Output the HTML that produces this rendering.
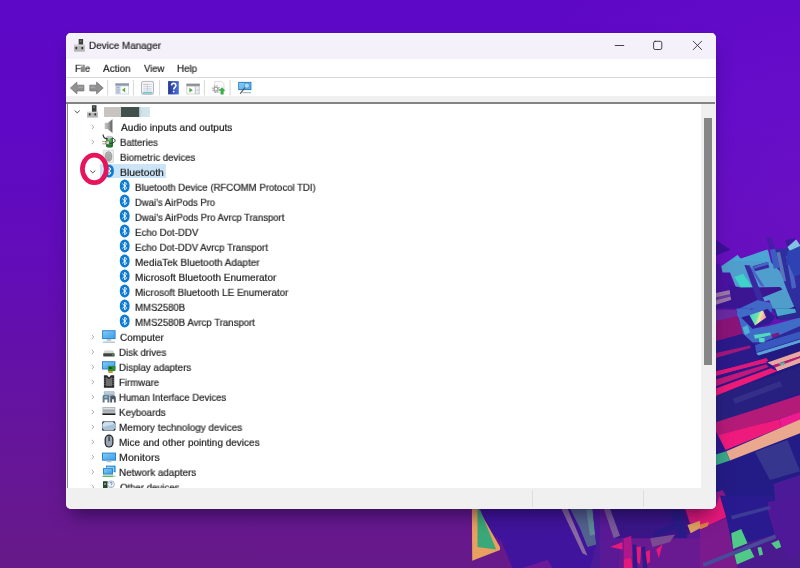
<!DOCTYPE html>
<html><head><meta charset="utf-8"><title>Device Manager</title>
<style>
html,body{margin:0;padding:0;}
body{width:800px;height:568px;overflow:hidden;position:relative;background:#5a11b4;font-family:"Liberation Sans",sans-serif;}
#wall{position:absolute;left:0;top:0;width:800px;height:568px;}
#win{position:absolute;left:66px;top:33.35px;width:650.2px;height:475.45px;border-radius:5px;overflow:hidden;background:#f0f0f0;box-shadow:0 0 1px rgba(40,20,80,.5),0 11px 16px -5px rgba(12,0,36,.5);}
#ui{position:absolute;left:0;top:0;width:800px;height:568px;}
.a{position:absolute;}
.t{position:absolute;white-space:nowrap;transform-origin:0 0;will-change:transform;-webkit-text-stroke:0.22px #1f1f1f;font-family:"Liberation Sans",sans-serif;}
svg{position:absolute;overflow:visible;}
</style></head><body>

<svg id="wall" width="800" height="568" viewBox="0 0 800 568">
<defs>
<linearGradient id="bg" x1="0" y1="0" x2="0" y2="1">
<stop offset="0" stop-color="#5d08c6"/><stop offset="0.22" stop-color="#5f09c6"/><stop offset="0.47" stop-color="#620cb8"/><stop offset="0.75" stop-color="#65149c"/><stop offset="1" stop-color="#671a88"/>
</linearGradient>
<radialGradient id="bgr" gradientUnits="userSpaceOnUse" cx="820" cy="190" r="330"><stop offset="0" stop-color="#7c1cd0" stop-opacity="0.32"/><stop offset="0.5" stop-color="#7c1cd0" stop-opacity="0.16"/><stop offset="1" stop-color="#7c1cd0" stop-opacity="0"/></radialGradient>
</defs>
<rect width="800" height="568" fill="url(#bg)"/>
<rect width="800" height="568" fill="url(#bgr)"/>
<polygon points="715.8,240.0 730.6,249.8 715.8,255.6" fill="#3d0f98"/>
<polygon points="715.8,262.5 730.0,272.5 737.5,291.2 715.8,293.1" fill="#4a12a2"/>
<polygon points="771.2,250.0 800.0,246.2 800.0,310.0 795.0,308.8 787.5,291.2 780.0,271.2 771.2,262.5" fill="#2f2e9e"/>
<polygon points="786.2,256.2 790.6,255.0 796.2,287.5 791.9,288.8" fill="#4a62c2"/>
<polygon points="776.2,252.5 780.0,251.9 786.2,281.2 782.5,281.2" fill="#5a74b8"/>
<polygon points="785.0,240.6 796.2,238.1 787.5,246.9" fill="#3a1a9a"/>
<polygon points="787.5,246.9 796.2,239.4 800.0,245.0 800.0,248.8 790.0,251.2" fill="#7fc2e2"/>
<polygon points="787.5,251.2 800.0,248.8 800.0,265.0 786.2,265.0" fill="#2e40b2"/>
<polygon points="788.0,251.5 800.0,246.0 800.0,274.3 794.2,276.7 789.3,265.7" fill="#2e42b4"/>
<polygon points="721.2,266.2 737.5,255.0 740.6,258.8 768.1,250.6 771.2,262.5 780.0,271.2 787.5,291.2 795.0,308.8 777.5,317.5 770.0,300.0 760.0,302.5 737.5,291.2 730.0,272.5 722.5,272.5" fill="#509ece"/>
<polygon points="730.6,261.0 737.5,255.0 740.6,258.8 767.5,249.4 770.0,261.0" fill="#4ba6d3"/>
<polygon points="766.0,237.2 771.2,237.2 775.0,248.8 770.0,250.0" fill="#4a1aa8"/>
<polygon points="770.0,250.0 775.0,248.8 780.0,267.5 773.8,268.8" fill="#3c5cc2"/>
<polygon points="734.4,276.9 743.1,273.8 752.5,287.5 741.2,287.5" fill="#3fd2c8"/>
<polygon points="715.8,293.1 730.0,290.0 731.2,300.0 715.8,305.0" fill="#9a78aa"/>
<polygon points="715.8,297.2 730.6,294.0 731.0,296.5 715.8,300.2" fill="#6a3aa0"/>
<polygon points="728.8,285.0 741.2,287.5 780.0,286.9 782.5,289.4 762.5,297.5 755.0,308.8 715.8,308.8 715.8,305.0 731.2,300.0" fill="#3c1692"/>
<polygon points="744.4,265.0 750.0,265.6 765.0,302.5 758.8,303.8" fill="#3a2aa2"/>
<polygon points="752.5,266.2 767.5,261.9 769.4,267.5 755.0,271.2" fill="#3a2aa2"/>
<polygon points="748.9,265.7 752.3,268.1 764.6,286.6 761.2,286.6" fill="#4a62c8"/>
<polygon points="752.3,266.9 768.3,261.7 769.0,264.2 753.6,269.1" fill="#4466c4"/>
<polygon points="736.2,310.0 757.5,300.0 775.0,303.8 770.0,315.0 737.5,317.5" fill="#4068c6"/>
<polygon points="767.5,296.2 786.2,291.2 795.0,308.8 777.5,317.5" fill="#4f9dcb"/>
<polygon points="775.0,315.0 795.0,306.2 796.9,310.0 776.9,319.4" fill="#241c86"/>
<polygon points="715.8,308.8 755.0,308.8 736.2,312.5 715.8,316.2" fill="#5a1aa0"/>
<polygon points="715.8,316.2 736.2,312.5 737.5,321.0 715.8,321.0" fill="#7a1a8c"/>
<polygon points="715.8,343.0 760.0,343.0 800.0,330.0 800.0,500.0 715.8,500.0" fill="#29198a"/>
<polygon points="715.8,310.0 736.2,310.0 737.5,316.2 715.8,321.2" fill="#6a2aa2"/>
<polygon points="715.8,321.2 737.5,316.2 743.1,333.8 715.8,341.2" fill="#8a1478"/>
<polygon points="715.8,341.2 743.1,333.8 752.5,342.5 756.2,356.2 765.0,360.0 715.8,371.2" fill="#2a1a8a"/>
<polygon points="715.8,353.1 750.0,345.6 750.6,348.1 715.8,358.1" fill="#a0187c"/>
<polygon points="715.8,371.2 765.0,360.0 767.5,362.5 715.8,375.6" fill="#e0187a"/>
<polygon points="715.8,375.6 767.5,362.5 770.0,365.6 715.8,378.1" fill="#2a1a8a"/>
<polygon points="715.8,378.1 770.0,365.6 777.5,371.2 756.2,385.0 715.8,385.0" fill="#2a1a86"/>
<polygon points="736.2,308.8 750.0,308.8 752.5,328.8 767.5,326.2 800.0,317.5 800.0,326.2 780.0,335.0 762.5,342.5 752.5,342.5 743.1,333.8" fill="#3f6cc6"/>
<polygon points="741.2,317.5 749.4,315.0 763.1,310.6 767.5,308.8 775.0,317.5 770.0,323.8 752.5,328.8" fill="#2f1a92"/>
<defs><linearGradient id="rb" x1="0" y1="0.3" x2="1" y2="0.6"><stop offset="0" stop-color="#36d6c6"/><stop offset="0.45" stop-color="#6fe0b0"/><stop offset="0.6" stop-color="#e6eaa0"/><stop offset="0.8" stop-color="#f2b0a8"/><stop offset="1" stop-color="#f08ab0"/></linearGradient></defs>
<polygon points="749.4,315.0 763.1,310.6 766.2,317.5 755.0,325.6" fill="url(#rb)"/>
<polygon points="771.2,308.8 800.0,308.8 800.0,317.8 780.0,320.2" fill="#2a2a92"/>
<polygon points="775.0,308.8 795.0,308.8 796.2,312.5 777.5,316.2" fill="#4aa6cc"/>
<polygon points="753.8,335.0 770.0,332.5 771.2,335.0 755.0,338.8" fill="#50d8c0"/>
<polygon points="758.8,338.1 764.4,338.1 765.0,342.8 759.4,342.8" fill="#50d8c0"/>
<polygon points="771.2,334.4 778.8,332.5 780.0,336.2 772.5,338.1" fill="#7a1a80"/>
<polygon points="747.5,325.0 750.0,332.5 745.0,335.0 742.5,327.5" fill="#4fb0d4"/>
<polygon points="755.0,345.0 800.0,331.2 800.0,338.8 756.2,352.5" fill="#3858c0"/>
<polygon points="752.5,342.5 762.5,342.5 780.0,335.0 800.0,326.2 800.0,331.2 755.0,345.0" fill="#2c2a98"/>
<polygon points="756.2,353.1 800.0,339.4 800.0,342.8 758.8,356.2" fill="#5aa0d8"/>
<polygon points="756.2,356.2 800.0,342.8 800.0,351.2 767.5,362.5 765.0,360.0" fill="#221a80"/>
<polygon points="767.5,362.5 800.0,351.2 800.0,356.2 772.5,365.6" fill="#e8a8a0"/>
<polygon points="772.5,365.6 800.0,356.2 800.0,358.1 775.0,367.5" fill="#c01878"/>
<polygon points="775.0,367.5 800.0,358.1 800.0,363.1 777.5,371.2" fill="#e8a8a0"/>
<polygon points="777.5,363.8 785.0,361.9 783.8,365.6" fill="#50c0a0"/>
<polygon points="777.5,371.2 800.0,363.1 800.0,381.0 756.2,381.0" fill="#221a80"/>
<polygon points="715.8,395.6 782.5,372.5 800.0,366.2 800.0,392.5 715.8,423.8" fill="#28207f"/>
<polygon points="732.5,398.8 780.0,381.2 782.5,386.2 735.0,403.8" fill="#34308a"/>
<polygon points="715.8,372.1 766.3,358.0 768.6,360.8 715.8,376.0" fill="#e0187a"/>
<polygon points="715.8,379.4 766.3,364.2 768.6,367.0 715.8,386.2" fill="#c2187a"/>
<polygon points="715.8,388.4 770.8,368.2 777.6,371.0 715.8,395.8" fill="#ee1a78"/>
<polygon points="797.5,396.9 800.0,396.2 800.0,400.0 797.5,400.0" fill="#e8e0f0"/>
<polygon points="715.8,465.0 730.0,460.0 800.0,432.5 800.0,501.0 715.8,501.0" fill="#241c86"/>
<polygon points="755.0,451.9 787.5,440.0 800.0,471.2 770.0,480.0" fill="#37368f"/>
<polygon points="773.8,483.8 800.0,475.0 800.0,501.0 775.0,501.0" fill="#4a1a98"/>
<polygon points="715.8,492.5 722.5,490.0 728.8,501.0 715.8,501.0" fill="#8a1a8a"/>
<polygon points="715.8,422.2 800.0,395.0 800.0,413.0 715.8,437.0" fill="#b41a78"/>
<polygon points="715.8,436.0 779.4,419.0 781.2,427.6 715.8,454.0" fill="#ee1a7c"/>
<polygon points="779.4,419.0 800.0,412.2 800.0,420.0 781.2,427.6" fill="#ee1a90"/>
<polygon points="726.2,451.2 800.0,419.6 800.0,433.2 730.0,460.5" fill="#eaa88e"/>
<polygon points="715.8,431.0 726.2,451.2 715.8,454.6" fill="#2a1a8a"/>
<polygon points="715.8,454.4 726.2,451.2 730.0,460.5 715.8,465.2" fill="#3aa888"/>
<polygon points="700.0,508.9 716.2,504.5 720.0,495.8 726.2,517.0 700.0,529.5" fill="#e8187a"/>
<polygon points="700.0,524.5 708.8,522.0 707.5,527.0 700.0,529.5" fill="#e0804a"/>
<polygon points="720.0,495.8 775.0,495.8 767.5,508.2 775.0,534.5 732.5,547.0 726.2,517.0" fill="#2a1a90"/>
<polygon points="767.5,502.0 800.0,497.0 800.0,549.5 790.0,559.5 775.0,534.5" fill="#4f1899"/>
<polygon points="700.0,529.5 726.2,518.2 732.5,547.0 737.5,568.0 700.0,568.0" fill="#7a1a8c"/>
<polygon points="732.5,547.0 775.0,534.5 790.0,559.5 800.0,549.5 800.0,568.0 737.5,568.0" fill="#4a1a8e"/>
<polygon points="731.2,533.2 741.2,528.9 747.5,543.2 733.1,548.9" fill="#50c888"/>
<polygon points="734.4,554.5 750.0,548.2 754.4,557.0 736.9,564.5" fill="#50c888"/>
<polygon points="757.5,547.6 761.2,547.0 763.1,554.5 759.4,555.8" fill="#50c888"/>
<polygon points="771.2,543.2 778.8,540.1 781.2,547.0 776.2,548.9" fill="#50c888"/>
<polygon points="702.5,563.2 775.0,534.5 776.2,538.2 703.8,567.0" fill="#4a4a9a"/>
<polygon points="731.2,515.8 770.0,505.8 770.6,508.9 731.9,519.5" fill="#3c3c96"/>
<polygon points="600.0,508.5 700.0,508.5 700.0,568.0 600.0,568.0" fill="#5a1a96"/>
<polygon points="607.5,508.5 685.0,508.5 690.0,523.2 690.6,533.2 681.2,538.2 650.0,540.8 623.8,538.2 613.8,538.2" fill="#3a1688"/>
<polygon points="603.8,508.5 610.0,508.5 620.0,535.8 613.8,538.2" fill="#7a5a9c"/>
<polygon points="685.0,508.5 700.0,508.5 700.0,522.0 690.0,523.2" fill="#e0187a"/>
<polygon points="687.5,525.1 700.0,520.8 700.0,528.2 690.6,533.2" fill="#e0a060"/>
<polygon points="653.8,532.0 680.0,520.8 681.2,525.8 655.0,537.0" fill="#2a1a88"/>
<polygon points="670.0,512.0 680.0,509.5 687.5,538.2 680.0,540.8" fill="#2a1c88"/>
<polygon points="621.2,538.2 700.0,538.2 700.0,568.0 618.8,568.0" fill="#6a1a90"/>
<polygon points="610.0,547.0 622.5,542.0 622.5,549.5" fill="#e6187a"/>
<polygon points="636.2,547.0 641.2,546.4 640.0,564.5 636.9,562.0" fill="#e6187a"/>
<polygon points="645.0,552.0 650.0,550.1 650.0,562.0 646.2,564.5" fill="#e6187a"/>
<polygon points="656.2,549.5 662.5,544.5 658.8,558.2" fill="#e6187a"/>
<polygon points="623.8,559.5 631.2,557.0 632.5,568.0 623.8,568.0" fill="#e6187a"/>
<polygon points="623.8,538.2 631.2,535.8 632.5,557.0 623.8,559.5" fill="#b0188a"/>
<polygon points="632.5,544.5 636.2,544.5 637.5,568.0 633.1,568.0" fill="#2e1a8a"/>
<polygon points="641.2,547.0 645.0,546.4 647.5,568.0 643.1,568.0" fill="#2e1a8a"/>
<polygon points="650.0,538.2 675.0,534.5 670.0,542.0 652.5,547.0" fill="#7a4a92"/>
<polygon points="500.0,508.5 600.0,508.5 600.0,568.0 552.5,568.0 547.5,560.1 522.5,568.0 512.5,568.0 500.0,538.2" fill="#40149c"/>
<polygon points="561.2,508.5 567.5,508.5 587.5,555.8 582.5,553.2" fill="#8a6aa2"/>
<polygon points="570.0,508.5 592.5,508.5 596.2,544.5 587.5,547.0 580.0,528.2" fill="#536390"/>
<polygon points="586.2,509.5 592.5,509.5 595.0,534.5 590.0,535.8" fill="#5f8a96"/>
<polygon points="522.5,568.0 547.5,560.1 552.5,568.0" fill="#6a1a98"/>
<polygon points="592.5,508.5 600.0,508.5 600.0,568.0 590.0,568.0 596.2,544.5" fill="#4a1a98"/>
<polygon points="480.0,508.5 500.0,508.5 500.0,543.2 496.2,535.8 493.8,540.8" fill="#40149c"/>
<polygon points="471.9,508.5 478.1,508.5 500.0,547.0 500.0,550.1 472.2,560.8" fill="#e8a060"/>
<polygon points="477.5,509.5 480.0,509.5 496.2,549.5 477.5,547.0" fill="#3aa878"/>
</svg>
<div id="win">
<div class="a" style="left:0.00px;top:-0.35px;width:651.00px;height:25.60px;background:#f4f1fa;"></div>
<div class="a" style="left:0.00px;top:0.00px;width:651.00px;height:0.80px;background:#fbfaff;"></div>
<div class="a" style="left:0.00px;top:25.25px;width:650.00px;height:18.60px;background:#ffffff;"></div>
<div class="a" style="left:0.00px;top:43.85px;width:650.00px;height:0.90px;background:#d9d9d9;"></div>
<div class="a" style="left:0.00px;top:44.75px;width:650.00px;height:17.90px;background:#ffffff;"></div>
<div class="a" style="left:0.00px;top:62.65px;width:650.00px;height:5.90px;background:#f0f0f0;"></div>
<div class="a" style="left:0.00px;top:68.55px;width:649.20px;height:1.70px;background:#838383;"></div>
<div class="a" style="left:0.00px;top:70.25px;width:2.00px;height:384.00px;background:#f6f4fa;"></div>
<div class="a" style="left:0.70px;top:70.25px;width:1.25px;height:384.00px;background:#8a8a8a;"></div>
<div class="a" style="left:1.95px;top:70.25px;width:633.25px;height:384.00px;background:#ffffff;"></div>
<div class="a" style="left:635.20px;top:70.25px;width:14.80px;height:384.00px;background:#f0f0f0;"></div>
<div class="a" style="left:638.20px;top:84.65px;width:7.60px;height:247.00px;background:#868686;"></div>
<div class="a" style="left:0.00px;top:454.25px;width:651.00px;height:21.40px;background:#f0f0f0;"></div>
<div class="a" style="left:466.30px;top:456.15px;width:0.80px;height:17.00px;background:#dedede;"></div>
<div class="a" style="left:577.30px;top:456.15px;width:0.80px;height:17.00px;background:#dedede;"></div>
</div>
<div id="ui">
<svg class="a" style="left:0;top:0" width="800" height="568" viewBox="0 0 800 568"><rect x="78.7" y="39" width="4.4" height="5.9" fill="#3b403e"/><rect x="80.1" y="40.6" width="1.4" height="1.1" fill="#8d9391"/><rect x="74" y="44.7" width="10.8" height="7" fill="#b6b6b6"/><rect x="74" y="44.7" width="10.8" height="1.2" fill="#d9d9d9"/><rect x="75.5" y="47" width="1.6" height="2.2" fill="#2c2c2c"/><rect x="81.5" y="47" width="1.6" height="2.2" fill="#2c2c2c"/></svg>
<span class="t" style="left:88.71px;top:38.60px;line-height:15px;font-size:10px;color:#1f1f1f;transform:scale(0.9889,0.9);">Device Manager</span>
<svg class="a" style="left:0;top:0" width="800" height="568" viewBox="0 0 800 568">
<g stroke="#303030" stroke-width="0.9" fill="none" stroke-linecap="round">
<path d="M615.2 45.5H623.8"/>
<rect x="653.6" y="41.3" width="8.2" height="8.2" rx="1.6"/>
<path d="M693.3 41.2L701.6 49.6M701.6 41.2L693.3 49.6"/>
</g></svg>
<span class="t" style="left:74.64px;top:61.70px;line-height:15px;font-size:10px;color:#1f1f1f;transform:scale(0.9463,0.9);">File</span>
<span class="t" style="left:103.40px;top:61.70px;line-height:15px;font-size:10px;color:#1f1f1f;transform:scale(0.9889,0.9);">Action</span>
<span class="t" style="left:144.21px;top:61.70px;line-height:15px;font-size:10px;color:#1f1f1f;transform:scale(0.9439,0.9);">View</span>
<span class="t" style="left:177.22px;top:61.70px;line-height:15px;font-size:10px;color:#1f1f1f;transform:scale(0.9741,0.9);">Help</span>
<svg class="a" style="left:0;top:0" width="800" height="568" viewBox="0 0 800 568">
<defs>
<linearGradient id="hlp" x1="0" x2="1" y1="0" y2="0"><stop offset="0" stop-color="#25358f"/><stop offset="0.55" stop-color="#3656c0"/><stop offset="1" stop-color="#4b74d6"/></linearGradient>
<linearGradient id="mon8" x1="0" x2="1" y1="0" y2="1"><stop offset="0" stop-color="#86cdf6"/><stop offset="1" stop-color="#52aeea"/></linearGradient>
</defs>
<!-- back / forward arrows -->
<path d="M70.4 88L76.9 82.1V85.2H83.9V90.9H76.9V93.9Z" fill="#909090" stroke="#787878" stroke-width="0.8" stroke-linejoin="round"/>
<path d="M103.2 88L96.6 82.1V85.2H89.8V90.9H96.6V93.9Z" fill="#909090" stroke="#787878" stroke-width="0.8" stroke-linejoin="round"/>
<path d="M78.5 87.2H83.2M90.5 87.2H95.2" stroke="#b8b8b8" stroke-width="0.8"/>
<!-- separators -->
<g stroke="#d4d4d4" stroke-width="0.9"><path d="M107.7 80V95.6M133.4 80V95.6M159.6 80V95.6M204.4 80V95.6M230.1 80V95.6"/></g>
<!-- icon 3: console tree back -->
<rect x="115.4" y="83.4" width="13.6" height="11" fill="#c3d1e1"/>
<rect x="115.4" y="83.4" width="13.6" height="2.2" fill="#8b98a8"/>
<rect x="120.6" y="86.4" width="7.6" height="7.2" fill="#ffffff"/>
<path d="M122.0 90L125.2 87.6V92.4Z" fill="#5fae3a"/>
<rect x="116.3" y="87.2" width="3.2" height="0.8" fill="#9fb0c4"/><rect x="116.3" y="89.4" width="3.2" height="0.8" fill="#9fb0c4"/><rect x="116.3" y="91.6" width="3.2" height="0.8" fill="#9fb0c4"/>
<!-- icon 4: properties sheet -->
<rect x="141.5" y="81.4" width="12" height="12.9" rx="1.6" fill="#f2f4f7" stroke="#a3a5ad" stroke-width="0.8"/>
<g stroke="#bcc6d2" stroke-width="0.7"><path d="M143.4 84.4H151.6M143.4 86.6H151.6M143.4 88.8H151.6M143.4 91H151.6M147.5 84.4V91"/></g>
<rect x="143.4" y="84.0" width="3.4" height="1.0" fill="#e2b6ba"/>
<rect x="142.6" y="92.2" width="9.8" height="1.3" fill="#57b8c0"/>
<!-- icon 5: help -->
<rect x="168.1" y="81.1" width="10.7" height="13.3" fill="url(#hlp)"/>
<path d="M171.5 85.6C171.5 82.6 175.9 82.6 175.9 85.4C175.9 87.4 173.7 87.4 173.7 89.6" fill="none" stroke="#fff" stroke-width="1.5"/>
<rect x="172.9" y="90.8" width="1.6" height="1.6" fill="#fff"/>
<!-- icon 6: console run -->
<rect x="186.4" y="83.7" width="13.4" height="10.7" fill="#c8ccd4"/>
<rect x="186.4" y="83.7" width="13.4" height="2.2" fill="#8f8f96"/>
<rect x="187.3" y="86.7" width="7.4" height="6.9" fill="#ffffff"/>
<path d="M189.4 87.8L192.8 90.2L189.4 92.6Z" fill="#4aa83a"/>
<rect x="196.0" y="86.9" width="2.6" height="2.6" fill="#eef0f4"/><rect x="196.0" y="90.6" width="2.6" height="2.6" fill="#eef0f4"/>
<!-- icon 7: update driver -->
<path d="M214.8 81.4H221.6L224.0 83.8V92.2H214.8Z" fill="#fbfbfb" stroke="#d0d0d0" stroke-width="0.7"/>
<circle cx="216.0" cy="89.1" r="2.7" fill="#a2a2a2"/>
<circle cx="216.0" cy="89.1" r="3.4" fill="none" stroke="#a2a2a2" stroke-width="1.1" stroke-dasharray="1.3 1.37"/>
<circle cx="216.0" cy="89.1" r="1.3" fill="#f6f6f6"/>
<path d="M222.1 87.3L225.4 90.8H223.6V94.4H220.6V90.8H218.8Z" fill="#35b044"/>
<!-- icon 8: scan monitor -->
<rect x="238.2" y="81.9" width="13.2" height="8.2" fill="#2c78c0"/>
<rect x="239.1" y="82.8" width="11.4" height="6.4" fill="url(#mon8)"/>
<circle cx="246.8" cy="85.6" r="2.6" fill="#a9dcf8" stroke="#3a88cc" stroke-width="0.7"/>
<path d="M244.9 87.6L240.2 93.6" stroke="#555" stroke-width="1.1"/>
<path d="M242.5 92.7H251" stroke="#8e9aa6" stroke-width="0.9"/>
</svg>
<div class="a" style="left:100.4px;top:164.2px;width:65.6px;height:13.6px;background:#cce4f7"></div>
<svg class="a" style="left:0;top:0" width="800" height="568" viewBox="0 0 800 568"><g transform="translate(0.00 0.00)"><rect x="91.9" y="105.2" width="4.6" height="6.8" fill="#3b403e"/><rect x="93.3" y="106.6" width="1.4" height="1.2" fill="#9aa09e"/><rect x="87.1" y="111.8" width="10.8" height="5.8" fill="#b4b4b4"/><rect x="87.1" y="111.8" width="10.8" height="1.1" fill="#d8d8d8"/><rect x="88.9" y="113.3" width="1.6" height="2.1" fill="#2c2c2c"/><rect x="94.5" y="113.3" width="1.6" height="2.1" fill="#2c2c2c"/></g></svg>
<svg class="a" style="left:0;top:0" width="800" height="568"><path d="M74.95 110.80L77.20 112.90L79.45 110.80" fill="none" stroke="#4a4a4a" stroke-width="0.95" stroke-linecap="round" stroke-linejoin="round"/></svg>
<span class="t" style="left:120.50px;top:120.55px;line-height:15px;font-size:10px;color:#1f1f1f;transform:scale(1.0119,0.9);">Audio inputs and outputs</span>
<svg class="a" style="left:0;top:0" width="800" height="568" viewBox="0 0 800 568"><g transform="translate(0.00 0.00)"><defs><linearGradient id="spk" x1="0" x2="1" y1="0" y2="0"><stop offset="0" stop-color="#c9c9c9"/><stop offset="0.45" stop-color="#a2a2a2"/><stop offset="1" stop-color="#5e5e5e"/></linearGradient></defs><path d="M105.1 123.2H107.6L112.3 119.6V132.7L107.6 128.7H105.1Z" fill="url(#spk)" stroke="#8a8a8a" stroke-width="0.4"/></g></svg>
<svg class="a" style="left:0;top:0" width="800" height="568"><path d="M92.05 125.10L93.75 127.00L92.05 128.90" fill="none" stroke="#a4a4a4" stroke-width="0.9" stroke-linecap="round" stroke-linejoin="round"/></svg>
<span class="t" style="left:119.73px;top:135.55px;line-height:15px;font-size:10px;color:#1f1f1f;transform:scale(0.9582,0.9);">Batteries</span>
<svg class="a" style="left:0;top:0" width="800" height="568" viewBox="0 0 800 568"><g transform="translate(0.00 0.00)"><defs><linearGradient id="bat" x1="0" x2="1" y1="0" y2="0"><stop offset="0" stop-color="#2a8f36"/><stop offset="0.4" stop-color="#7fd68a"/><stop offset="0.75" stop-color="#2f9a3a"/><stop offset="1" stop-color="#1d6e28"/></linearGradient></defs><rect x="106" y="136.6" width="7" height="10.9" rx="2.8" ry="2.2" fill="url(#bat)"/><ellipse cx="109.5" cy="145.9" rx="3.3" ry="1.6" fill="#1c6425" fill-opacity="0.8"/><ellipse cx="109.5" cy="137.1" rx="3.2" ry="1.4" fill="#cbbfda"/><path d="M103.1 134.9C103.4 137.6 105.4 138.7 107.2 138.9" fill="none" stroke="#2a2f2c" stroke-width="1.1" stroke-linecap="round"/><path d="M112.6 138.2C116.2 138.6 116.2 143.0 111.0 143.3L108.6 143.0" fill="none" stroke="#2a2f2c" stroke-width="1.0" stroke-linecap="round"/><rect x="102.2" y="141.1" width="4" height="0.9" fill="#b09868"/><rect x="102.2" y="143.4" width="4" height="0.9" fill="#b09868"/><rect x="105.9" y="140.8" width="3.6" height="3.8" rx="0.6" fill="#d4d6cf" stroke="#2a3a2c" stroke-width="0.6"/></g></svg>
<svg class="a" style="left:0;top:0" width="800" height="568"><path d="M92.05 140.10L93.75 142.00L92.05 143.90" fill="none" stroke="#a4a4a4" stroke-width="0.9" stroke-linecap="round" stroke-linejoin="round"/></svg>
<span class="t" style="left:119.73px;top:150.55px;line-height:15px;font-size:10px;color:#1f1f1f;transform:scale(0.9624,0.9);">Biometric devices</span>
<svg class="a" style="left:0;top:0" width="800" height="568" viewBox="0 0 800 568"><g transform="translate(0.00 0.00)"><rect x="103.7" y="150.1" width="9.7" height="12.3" fill="#eceeee" stroke="#cdd2d2" stroke-width="0.7"/><ellipse cx="108.5" cy="156.5" rx="3.3" ry="4.7" fill="#b9b9b9"/><ellipse cx="108.5" cy="156.5" rx="3.3" ry="4.7" fill="none" stroke="#8c8c8c" stroke-width="0.8"/><ellipse cx="108.5" cy="157.0" rx="1.7" ry="3.0" fill="none" stroke="#8f8f8f" stroke-width="0.7"/><path d="M108.5 155.6V160.2" stroke="#9a9a9a" stroke-width="0.7"/></g></svg>
<span class="t" style="left:119.67px;top:165.55px;line-height:15px;font-size:10px;color:#1f1f1f;transform:scale(1.0368,0.9);">Bluetooth</span>
<svg class="a" style="left:0;top:0" width="800" height="568" viewBox="0 0 800 568"><g transform="translate(109.00 171.00)"><rect x="-4.85" y="-6.4" width="9.7" height="12.8" rx="4.85" ry="5.6" fill="#0b7bd6"/><path d="M-2.1 -2.1L2 1.9L0 3.9V-3.9L2 -1.9L-2.1 2.1" fill="none" stroke="#fff" stroke-width="0.95" stroke-linejoin="round" stroke-linecap="round"/></g></svg>
<svg class="a" style="left:0;top:0" width="800" height="568"><path d="M90.55 170.80L92.80 172.90L95.05 170.80" fill="none" stroke="#4a4a4a" stroke-width="0.95" stroke-linecap="round" stroke-linejoin="round"/></svg>
<span class="t" style="left:135.23px;top:180.55px;line-height:15px;font-size:10px;color:#1f1f1f;transform:scale(0.9604,0.9);">Bluetooth Device (RFCOMM Protocol TDI)</span>
<svg class="a" style="left:0;top:0" width="800" height="568" viewBox="0 0 800 568"><g transform="translate(124.70 186.00)"><rect x="-4.85" y="-6.4" width="9.7" height="12.8" rx="4.85" ry="5.6" fill="#0b7bd6"/><path d="M-2.1 -2.1L2 1.9L0 3.9V-3.9L2 -1.9L-2.1 2.1" fill="none" stroke="#fff" stroke-width="0.95" stroke-linejoin="round" stroke-linecap="round"/></g></svg>
<span class="t" style="left:135.24px;top:195.55px;line-height:15px;font-size:10px;color:#1f1f1f;transform:scale(0.9438,0.9);">Dwai’s AirPods Pro</span>
<svg class="a" style="left:0;top:0" width="800" height="568" viewBox="0 0 800 568"><g transform="translate(124.70 201.00)"><rect x="-4.85" y="-6.4" width="9.7" height="12.8" rx="4.85" ry="5.6" fill="#0b7bd6"/><path d="M-2.1 -2.1L2 1.9L0 3.9V-3.9L2 -1.9L-2.1 2.1" fill="none" stroke="#fff" stroke-width="0.95" stroke-linejoin="round" stroke-linecap="round"/></g></svg>
<span class="t" style="left:135.24px;top:210.55px;line-height:15px;font-size:10px;color:#1f1f1f;transform:scale(0.9483,0.9);">Dwai’s AirPods Pro Avrcp Transport</span>
<svg class="a" style="left:0;top:0" width="800" height="568" viewBox="0 0 800 568"><g transform="translate(124.70 216.00)"><rect x="-4.85" y="-6.4" width="9.7" height="12.8" rx="4.85" ry="5.6" fill="#0b7bd6"/><path d="M-2.1 -2.1L2 1.9L0 3.9V-3.9L2 -1.9L-2.1 2.1" fill="none" stroke="#fff" stroke-width="0.95" stroke-linejoin="round" stroke-linecap="round"/></g></svg>
<span class="t" style="left:135.23px;top:225.55px;line-height:15px;font-size:10px;color:#1f1f1f;transform:scale(0.9645,0.9);">Echo Dot-DDV</span>
<svg class="a" style="left:0;top:0" width="800" height="568" viewBox="0 0 800 568"><g transform="translate(124.70 231.00)"><rect x="-4.85" y="-6.4" width="9.7" height="12.8" rx="4.85" ry="5.6" fill="#0b7bd6"/><path d="M-2.1 -2.1L2 1.9L0 3.9V-3.9L2 -1.9L-2.1 2.1" fill="none" stroke="#fff" stroke-width="0.95" stroke-linejoin="round" stroke-linecap="round"/></g></svg>
<span class="t" style="left:135.23px;top:240.55px;line-height:15px;font-size:10px;color:#1f1f1f;transform:scale(0.9614,0.9);">Echo Dot-DDV Avrcp Transport</span>
<svg class="a" style="left:0;top:0" width="800" height="568" viewBox="0 0 800 568"><g transform="translate(124.70 246.00)"><rect x="-4.85" y="-6.4" width="9.7" height="12.8" rx="4.85" ry="5.6" fill="#0b7bd6"/><path d="M-2.1 -2.1L2 1.9L0 3.9V-3.9L2 -1.9L-2.1 2.1" fill="none" stroke="#fff" stroke-width="0.95" stroke-linejoin="round" stroke-linecap="round"/></g></svg>
<span class="t" style="left:135.20px;top:255.55px;line-height:15px;font-size:10px;color:#1f1f1f;transform:scale(0.9960,0.9);">MediaTek Bluetooth Adapter</span>
<svg class="a" style="left:0;top:0" width="800" height="568" viewBox="0 0 800 568"><g transform="translate(124.70 261.00)"><rect x="-4.85" y="-6.4" width="9.7" height="12.8" rx="4.85" ry="5.6" fill="#0b7bd6"/><path d="M-2.1 -2.1L2 1.9L0 3.9V-3.9L2 -1.9L-2.1 2.1" fill="none" stroke="#fff" stroke-width="0.95" stroke-linejoin="round" stroke-linecap="round"/></g></svg>
<span class="t" style="left:135.20px;top:270.55px;line-height:15px;font-size:10px;color:#1f1f1f;transform:scale(1.0050,0.9);">Microsoft Bluetooth Enumerator</span>
<svg class="a" style="left:0;top:0" width="800" height="568" viewBox="0 0 800 568"><g transform="translate(124.70 276.00)"><rect x="-4.85" y="-6.4" width="9.7" height="12.8" rx="4.85" ry="5.6" fill="#0b7bd6"/><path d="M-2.1 -2.1L2 1.9L0 3.9V-3.9L2 -1.9L-2.1 2.1" fill="none" stroke="#fff" stroke-width="0.95" stroke-linejoin="round" stroke-linecap="round"/></g></svg>
<span class="t" style="left:135.21px;top:285.55px;line-height:15px;font-size:10px;color:#1f1f1f;transform:scale(0.9851,0.9);">Microsoft Bluetooth LE Enumerator</span>
<svg class="a" style="left:0;top:0" width="800" height="568" viewBox="0 0 800 568"><g transform="translate(124.70 291.00)"><rect x="-4.85" y="-6.4" width="9.7" height="12.8" rx="4.85" ry="5.6" fill="#0b7bd6"/><path d="M-2.1 -2.1L2 1.9L0 3.9V-3.9L2 -1.9L-2.1 2.1" fill="none" stroke="#fff" stroke-width="0.95" stroke-linejoin="round" stroke-linecap="round"/></g></svg>
<span class="t" style="left:135.23px;top:300.55px;line-height:15px;font-size:10px;color:#1f1f1f;transform:scale(0.9607,0.9);">MMS2580B</span>
<svg class="a" style="left:0;top:0" width="800" height="568" viewBox="0 0 800 568"><g transform="translate(124.70 306.00)"><rect x="-4.85" y="-6.4" width="9.7" height="12.8" rx="4.85" ry="5.6" fill="#0b7bd6"/><path d="M-2.1 -2.1L2 1.9L0 3.9V-3.9L2 -1.9L-2.1 2.1" fill="none" stroke="#fff" stroke-width="0.95" stroke-linejoin="round" stroke-linecap="round"/></g></svg>
<span class="t" style="left:135.23px;top:315.55px;line-height:15px;font-size:10px;color:#1f1f1f;transform:scale(0.9605,0.9);">MMS2580B Avrcp Transport</span>
<svg class="a" style="left:0;top:0" width="800" height="568" viewBox="0 0 800 568"><g transform="translate(124.70 321.00)"><rect x="-4.85" y="-6.4" width="9.7" height="12.8" rx="4.85" ry="5.6" fill="#0b7bd6"/><path d="M-2.1 -2.1L2 1.9L0 3.9V-3.9L2 -1.9L-2.1 2.1" fill="none" stroke="#fff" stroke-width="0.95" stroke-linejoin="round" stroke-linecap="round"/></g></svg>
<span class="t" style="left:119.50px;top:330.55px;line-height:15px;font-size:10px;color:#1f1f1f;transform:scale(0.9977,0.9);">Computer</span>
<svg class="a" style="left:0;top:0" width="800" height="568" viewBox="0 0 800 568"><g transform="translate(0.00 0.00)"><defs><linearGradient id="mc" x1="0" x2="1" y1="0" y2="1"><stop offset="0" stop-color="#7fcaf6"/><stop offset="1" stop-color="#3f9fe6"/></linearGradient></defs><rect x="102.10" y="330.20" width="13.50" height="8.90" fill="#2b86d2"/><rect x="103.10" y="331.20" width="11.50" height="6.90" fill="url(#mc)"/><rect x="106.6" y="339.1" width="4.6" height="1.8" fill="#b9c4cf"/><rect x="102.8" y="341.6" width="12.2" height="1.1" fill="#9fb2c6"/></g></svg>
<svg class="a" style="left:0;top:0" width="800" height="568"><path d="M92.05 335.10L93.75 337.00L92.05 338.90" fill="none" stroke="#a4a4a4" stroke-width="0.9" stroke-linecap="round" stroke-linejoin="round"/></svg>
<span class="t" style="left:119.23px;top:345.55px;line-height:15px;font-size:10px;color:#1f1f1f;transform:scale(0.9665,0.9);">Disk drives</span>
<svg class="a" style="left:0;top:0" width="800" height="568" viewBox="0 0 800 568"><g transform="translate(0.00 0.00)"><path d="M104.6 350.6H113.2L114.6 353.4H103.2Z" fill="#d6d6d6"/><rect x="103.2" y="353.3" width="11.4" height="3.1" rx="0.6" fill="#3c463e"/><rect x="112.2" y="354.3" width="1.4" height="1.1" fill="#58c060"/></g></svg>
<svg class="a" style="left:0;top:0" width="800" height="568"><path d="M92.05 350.10L93.75 352.00L92.05 353.90" fill="none" stroke="#a4a4a4" stroke-width="0.9" stroke-linecap="round" stroke-linejoin="round"/></svg>
<span class="t" style="left:119.23px;top:360.55px;line-height:15px;font-size:10px;color:#1f1f1f;transform:scale(0.9686,0.9);">Display adapters</span>
<svg class="a" style="left:0;top:0" width="800" height="568" viewBox="0 0 800 568"><g transform="translate(0.00 0.00)"><defs><linearGradient id="md" x1="0" x2="1" y1="0" y2="1"><stop offset="0" stop-color="#7fcaf6"/><stop offset="1" stop-color="#3f9fe6"/></linearGradient></defs><rect x="102.00" y="361.20" width="13.40" height="8.30" fill="#2b86d2"/><rect x="103.00" y="362.20" width="11.40" height="6.30" fill="url(#md)"/><rect x="107.9" y="365.9" width="7.5" height="5.2" fill="#2f8a3c"/><rect x="109.2" y="367" width="2.4" height="2.0" fill="#174d22"/><rect x="108.4" y="371" width="4.3" height="2.0" fill="#c89a22"/></g></svg>
<svg class="a" style="left:0;top:0" width="800" height="568"><path d="M92.05 365.10L93.75 367.00L92.05 368.90" fill="none" stroke="#a4a4a4" stroke-width="0.9" stroke-linecap="round" stroke-linejoin="round"/></svg>
<span class="t" style="left:119.23px;top:375.55px;line-height:15px;font-size:10px;color:#1f1f1f;transform:scale(0.9629,0.9);">Firmware</span>
<svg class="a" style="left:0;top:0" width="800" height="568" viewBox="0 0 800 568"><g transform="translate(0.00 0.00)"><path d="M103.9 375.2H107.2L109.05 377.4L110.9 375.2H114.2V387.7H103.9Z" fill="#2a2a2a"/><path d="M106.0 377.0L109.05 379.3L112.1 377.0V386.0H106.0Z" fill="#6f6f6f"/><g stroke="#8c8c8c" stroke-width="0.7"><path d="M104.3 378.4H105.6M104.3 380.4H105.6M104.3 382.4H105.6M104.3 384.4H105.6M112.5 378.4H113.8M112.5 380.4H113.8M112.5 382.4H113.8M112.5 384.4H113.8"/></g></g></svg>
<svg class="a" style="left:0;top:0" width="800" height="568"><path d="M92.05 380.10L93.75 382.00L92.05 383.90" fill="none" stroke="#a4a4a4" stroke-width="0.9" stroke-linecap="round" stroke-linejoin="round"/></svg>
<span class="t" style="left:119.24px;top:390.55px;line-height:15px;font-size:10px;color:#1f1f1f;transform:scale(0.9550,0.9);">Human Interface Devices</span>
<svg class="a" style="left:0;top:0" width="800" height="568" viewBox="0 0 800 568"><g transform="translate(0.00 0.00)"><rect x="103.8" y="391.3" width="10.8" height="5.6" rx="0.6" fill="#a7b8c8"/><rect x="104.8" y="392.4" width="8.8" height="1.2" fill="#c9d6e2"/><path d="M102.6 396.6C102.6 395 104 394.6 105 395.2L108.2 395.2C109.2 395.2 109.4 396 109.4 397.4V402.6H107.4V399.6H104.6V402.6H102.6Z" fill="#64788a"/><rect x="104.4" y="396.2" width="3.0" height="1.6" fill="#7fd0d8"/><path d="M110.2 397.2C110.2 395.6 111.4 395.4 112.4 395.4H113.6C115.2 395.4 115.8 396.4 115.8 397.8V402.6H113.9V399.2H112.1V402.6H110.2Z" fill="#4d5a66"/></g></svg>
<svg class="a" style="left:0;top:0" width="800" height="568"><path d="M92.05 395.10L93.75 397.00L92.05 398.90" fill="none" stroke="#a4a4a4" stroke-width="0.9" stroke-linecap="round" stroke-linejoin="round"/></svg>
<span class="t" style="left:119.22px;top:405.55px;line-height:15px;font-size:10px;color:#1f1f1f;transform:scale(0.9764,0.9);">Keyboards</span>
<svg class="a" style="left:0;top:0" width="800" height="568" viewBox="0 0 800 568"><g transform="translate(0.00 0.00)"><rect x="102.4" y="407.0" width="13.0" height="6.6" fill="#b3b9bf"/><rect x="103.4" y="408.0" width="11.0" height="1.3" fill="#d9dde1"/><rect x="103.4" y="410.2" width="11.0" height="1.2" fill="#9da5ad"/><rect x="102.4" y="413.4" width="13.0" height="1.6" fill="#1f1f1f"/></g></svg>
<svg class="a" style="left:0;top:0" width="800" height="568"><path d="M92.05 410.10L93.75 412.00L92.05 413.90" fill="none" stroke="#a4a4a4" stroke-width="0.9" stroke-linecap="round" stroke-linejoin="round"/></svg>
<span class="t" style="left:119.21px;top:420.55px;line-height:15px;font-size:10px;color:#1f1f1f;transform:scale(0.9935,0.9);">Memory technology devices</span>
<svg class="a" style="left:0;top:0" width="800" height="568" viewBox="0 0 800 568"><g transform="translate(0.00 0.00)"><rect x="102.0" y="421.3" width="13.4" height="9.5" rx="1.6" fill="#2b3138"/><path d="M104.6 421.5H112.8L115.2 423.9V428.2L112.8 430.6H104.6L102.2 428.2V423.9Z" fill="#a9c2d6"/><path d="M104.8 422.2H112.6L114.3 423.9L103.0 427.0V424.0Z" fill="#cfdfeb"/></g></svg>
<svg class="a" style="left:0;top:0" width="800" height="568"><path d="M92.05 425.10L93.75 427.00L92.05 428.90" fill="none" stroke="#a4a4a4" stroke-width="0.9" stroke-linecap="round" stroke-linejoin="round"/></svg>
<span class="t" style="left:119.20px;top:435.55px;line-height:15px;font-size:10px;color:#1f1f1f;transform:scale(0.9993,0.9);">Mice and other pointing devices</span>
<svg class="a" style="left:0;top:0" width="800" height="568" viewBox="0 0 800 568"><g transform="translate(0.00 0.00)"><rect x="104.6" y="434.6" width="8.9" height="12.9" rx="4.4" ry="4.6" fill="#20242a"/><rect x="105.8" y="435.7" width="6.5" height="10.7" rx="3.2" ry="3.6" fill="#9ca7b4"/><rect x="108.5" y="436.2" width="1.2" height="5.0" fill="#2b323a"/></g></svg>
<svg class="a" style="left:0;top:0" width="800" height="568"><path d="M92.05 440.10L93.75 442.00L92.05 443.90" fill="none" stroke="#a4a4a4" stroke-width="0.9" stroke-linecap="round" stroke-linejoin="round"/></svg>
<span class="t" style="left:119.15px;top:450.55px;line-height:15px;font-size:10px;color:#1f1f1f;transform:scale(1.0618,0.9);">Monitors</span>
<svg class="a" style="left:0;top:0" width="800" height="568" viewBox="0 0 800 568"><g transform="translate(0.00 0.00)"><defs><linearGradient id="mm" x1="0" x2="1" y1="0" y2="1"><stop offset="0" stop-color="#7fcaf6"/><stop offset="1" stop-color="#3f9fe6"/></linearGradient></defs><rect x="102.00" y="452.60" width="14.00" height="8.10" fill="#2b86d2"/><rect x="103.00" y="453.60" width="12.00" height="6.10" fill="url(#mm)"/><rect x="106.6" y="460.7" width="4.8" height="1.6" fill="#b7c3ce"/></g></svg>
<svg class="a" style="left:0;top:0" width="800" height="568"><path d="M92.05 455.10L93.75 457.00L92.05 458.90" fill="none" stroke="#a4a4a4" stroke-width="0.9" stroke-linecap="round" stroke-linejoin="round"/></svg>
<span class="t" style="left:119.21px;top:465.55px;line-height:15px;font-size:10px;color:#1f1f1f;transform:scale(0.9858,0.9);">Network adapters</span>
<svg class="a" style="left:0;top:0" width="800" height="568" viewBox="0 0 800 568"><g transform="translate(0.00 0.00)"><defs><linearGradient id="mn1" x1="0" x2="1" y1="0" y2="1"><stop offset="0" stop-color="#7fcaf6"/><stop offset="1" stop-color="#3f9fe6"/></linearGradient></defs><rect x="106.00" y="465.60" width="9.60" height="6.60" fill="#2b86d2"/><rect x="107.00" y="466.60" width="7.60" height="4.60" fill="url(#mn1)"/><rect x="102.6" y="467.7" width="10.9" height="7.3" fill="#ffffff"/><defs><linearGradient id="mn2" x1="0" x2="1" y1="0" y2="1"><stop offset="0" stop-color="#7fcaf6"/><stop offset="1" stop-color="#3f9fe6"/></linearGradient></defs><rect x="103.00" y="468.10" width="10.00" height="6.50" fill="#2b86d2"/><rect x="104.00" y="469.10" width="8.00" height="4.50" fill="url(#mn2)"/><rect x="102.6" y="475.6" width="11.0" height="1.3" fill="#49b552"/><rect x="113.6" y="475.6" width="2.0" height="1.3" fill="#c8c8c8"/></g></svg>
<svg class="a" style="left:0;top:0" width="800" height="568"><path d="M92.05 470.10L93.75 472.00L92.05 473.90" fill="none" stroke="#a4a4a4" stroke-width="0.9" stroke-linecap="round" stroke-linejoin="round"/></svg>
<span class="t" style="left:119.52px;top:480.55px;line-height:15px;font-size:10px;color:#1f1f1f;transform:scale(0.9605,0.9);">Other devices</span>
<svg class="a" style="left:0;top:0" width="800" height="568" viewBox="0 0 800 568"><g transform="translate(0.00 0.00)"><rect x="103.0" y="481.2" width="4.6" height="8" fill="#274a2c"/><rect x="104.2" y="483.4" width="1.6" height="1.2" fill="#d8e0d8"/><circle cx="111.0" cy="484.3" r="3.4" fill="#eef4fb" stroke="#8d99a6" stroke-width="0.7"/><path d="M110.0 483.3C110.0 482.0 112.1 482.0 112.1 483.3C112.1 484.2 111.05 484.2 111.05 485.2M111.05 486.0V486.5" fill="none" stroke="#3e6fb8" stroke-width="0.8"/></g></svg>
<svg class="a" style="left:0;top:0" width="800" height="568"><path d="M92.05 485.10L93.75 487.00L92.05 488.90" fill="none" stroke="#a4a4a4" stroke-width="0.9" stroke-linecap="round" stroke-linejoin="round"/></svg>
<div class="a" style="left:104.2px;top:107.2px;width:17.2px;height:9.9px;background:#c7c4c1"></div>
<div class="a" style="left:121.3px;top:107.2px;width:17.4px;height:9.9px;background:#42504e"></div>
<div class="a" style="left:138.7px;top:107.2px;width:11.2px;height:9.9px;background:linear-gradient(90deg,#9fb4b8 0,#cfe2e8 18%,#d3e6ec 100%)"></div>
<div class="a" style="left:67.6px;top:487.6px;width:640px;height:20.4px;background:#f0f0f0"></div>
<div class="a" style="left:532.3px;top:489.5px;width:0.8px;height:17px;background:#dedede"></div>
<div class="a" style="left:643.3px;top:489.5px;width:0.8px;height:17px;background:#dedede"></div>
<svg class="a" style="left:0;top:0" width="800" height="568"><ellipse cx="94.35" cy="168.9" rx="11.95" ry="13.75" fill="none" stroke="#e6145b" stroke-width="4.7"/></svg>
</div>
</body></html>
